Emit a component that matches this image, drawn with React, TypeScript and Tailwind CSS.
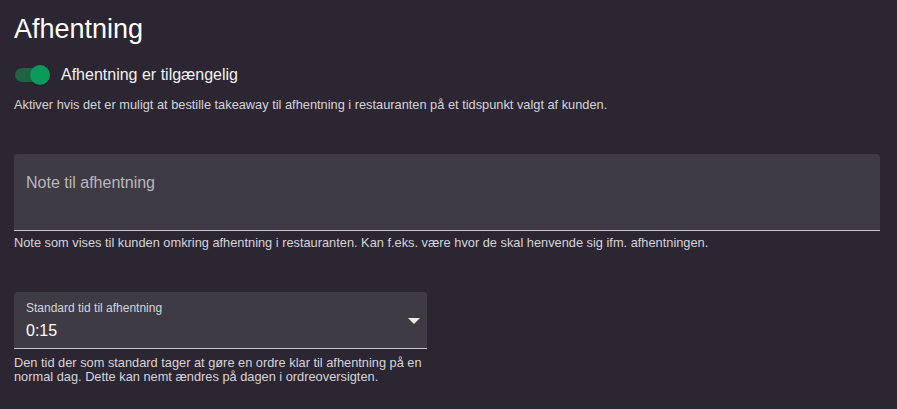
import React, { useState } from 'react';

const font = { fontFamily: '"Liberation Sans", Arial, sans-serif' };

export default function App() {
  const [enabled, setEnabled] = useState(true);
  const [note, setNote] = useState('');

  return (
    <div className="min-h-[409px] w-full bg-[#2b2631] text-white px-[14px] pt-[13px]" style={font}>
      <h1 className="text-[27px] leading-[32px] font-normal">Afhentning</h1>

      <div className="flex items-center mt-[18px] h-[24px]">
        <button type="button" onClick={() => setEnabled(!enabled)}
          className="relative w-[38px] h-[24px] shrink-0">
          <span className={'absolute left-[1px] top-[5px] w-[34px] h-[14px] rounded-full ' + (enabled ? 'bg-[#1e6444]' : 'bg-[#6b6873]')} />
          <span className={'absolute top-[2px] w-[20px] h-[20px] rounded-full shadow ' + (enabled ? 'left-[16px] bg-[#0b9a5a]' : 'left-0 bg-[#d0d0d0]')} />
        </button>
        <span className="ml-[9px] text-[16px] leading-[24px] text-[#f2f2f2]">Afhentning er tilgængelig</span>
      </div>
      <p className="mt-[10px] text-[12.8px] leading-[16px] text-[#d6d4da]">
        Aktiver hvis det er muligt at bestille takeaway til afhentning i restauranten på et tidspunkt valgt af kunden.
      </p>

      <div className="mt-[41px] w-[866px]">
        <div className="h-[77px] bg-[#3e3b45] rounded-t-[4px] border-b border-[#c9c7cc] px-[12px] pt-[17px]">
          <input value={note} onChange={e => setNote(e.target.value)} placeholder="Note til afhentning"
            className="w-full bg-transparent outline-none text-[16px] leading-[20px] text-white placeholder-[#b9b7bd]" />
        </div>
        <p className="mt-[4px] text-[12.8px] leading-[16px] text-[#d6d4da]">
          Note som vises til kunden omkring afhentning i restauranten. Kan f.eks. være hvor de skal henvende sig ifm. afhentningen.
        </p>
      </div>

      <div className="mt-[41px] w-[413px]">
        <div className="relative h-[57px] bg-[#3e3b45] rounded-t-[4px] border-b border-[#c9c7cc] px-[12px] pt-[9px] cursor-pointer">
          <div className="text-[12px] leading-[14px] text-[#d6d4da]">Standard tid til afhentning</div>
          <div className="mt-[6px] text-[16px] leading-[20px] text-white">0:15</div>
          <svg className="absolute right-[7px] top-[26px]" width="12" height="6" viewBox="0 0 10 5">
            <path d="M0 0l5 5 5-5z" fill="#ececec" />
          </svg>
        </div>
        <p className="mt-[7px] text-[12.8px] leading-[14px] text-[#d6d4da]">
          Den tid der som standard tager at gøre en ordre klar til afhentning på en normal dag. Dette kan nemt ændres på dagen i ordreoversigten.
        </p>
      </div>
    </div>
  );
}
